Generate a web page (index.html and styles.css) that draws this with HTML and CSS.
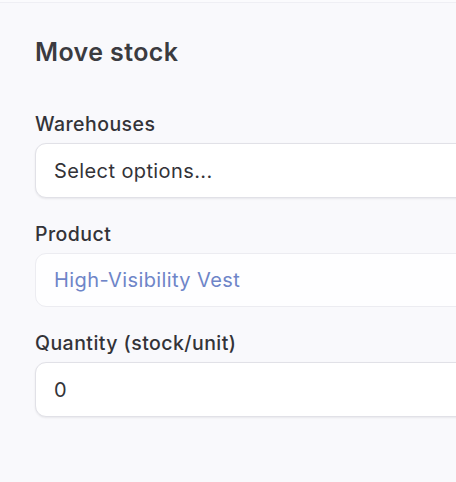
FILE: index.html
```html
<!DOCTYPE html>
<html lang="en">
<head>
<meta charset="utf-8">
<title>Move stock</title>
<link rel="stylesheet" href="styles.css">
</head>
<body>
<div class="topbar"></div>
<main class="panel">
  <h1 class="title">Move stock</h1>
  <form class="form">
    <div class="field">
      <label class="label">Warehouses</label>
      <div class="control">Select options...</div>
    </div>
    <div class="field">
      <label class="label">Product</label>
      <div class="control control-readonly">High-Visibility Vest</div>
    </div>
    <div class="field">
      <label class="label">Quantity (stock/unit)</label>
      <div class="control">0</div>
    </div>
  </form>
</main>
</body>
</html>
```
FILE: styles.css
```css
html, body {
  margin: 0;
  padding: 0;
  height: 100%;
  overflow: hidden;
  background: #f9f9fc;
  font-family: Inter, "Noto Sans", sans-serif;
  color: #333338;
}

.topbar {
  height: 2px;
  background: #fbfbfd;
  border-bottom: 1px solid #efeff4;
}

.panel {
  padding: 34px 0 0 35px;
  width: 560px;
}

.title {
  margin: 0;
  font-size: 25px;
  line-height: 30px;
  font-weight: 600;
  letter-spacing: 0.4px;
  color: #3b3b40;
}

.form {
  display: flex;
  flex-direction: column;
  gap: 24px;
  margin-top: 45px;
}

.field {
  display: flex;
  flex-direction: column;
  gap: 7px;
}

.label {
  font-size: 19.5px;
  line-height: 24px;
  font-weight: 500;
  letter-spacing: 0.45px;
  color: #333338;
}

.control {
  box-sizing: border-box;
  height: 55px;
  display: flex;
  align-items: center;
  padding: 0 18px;
  font-size: 20px;
  line-height: 24px;
  letter-spacing: 0.4px;
  background: #ffffff;
  border: 1px solid #e1e1e7;
  border-radius: 11px;
  box-shadow: 0 1px 2px rgba(20, 20, 40, 0.08);
  color: #333338;
}

.control-readonly {
  height: 54px;
  background: #fefeff;
  border-color: #ececf1;
  box-shadow: none;
  color: #6e85c8;
}
```
